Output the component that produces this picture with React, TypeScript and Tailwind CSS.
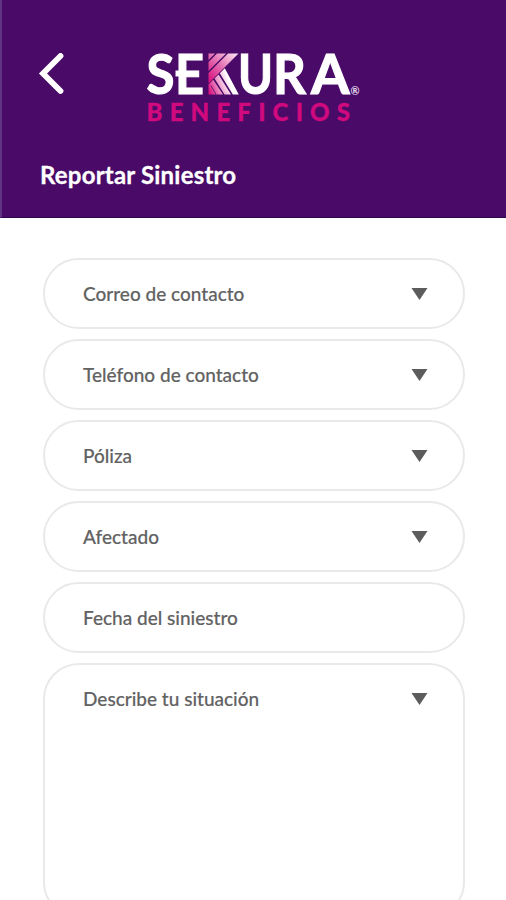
const FONT = "font-[Lato,sans-serif]";

function BackIcon() {
  return (
    <svg className="h-[42px] w-[26px]" viewBox="0 0 26 42" fill="none" stroke="#fff" strokeWidth="5.8" strokeLinecap="round">
      <path d="M22.500 3 5 20.500 22.500 38" strokeLinejoin="miter" />
    </svg>
  );
}

function Logo() {
  return (
    <svg className="h-[80px] w-[220px] overflow-visible" viewBox="144 48 220 80" fontFamily="Lato, sans-serif" fontWeight="700">
      <defs>
        <linearGradient id="upper" gradientUnits="userSpaceOnUse" x1="208" y1="80" x2="236" y2="53">
          <stop offset="0" stopColor="#d9117d" />
          <stop offset="0.45" stopColor="#e366ad" />
          <stop offset="1" stopColor="#fbe3f1" />
        </linearGradient>
        <linearGradient id="lower" gradientUnits="userSpaceOnUse" x1="208" y1="88" x2="229" y2="80">
          <stop offset="0" stopColor="#dc1480" />
          <stop offset="0.5" stopColor="#ee9bcb" />
          <stop offset="1" stopColor="#ffffff" />
        </linearGradient>
      </defs>
      <g fill="#fff" stroke="#fff" strokeWidth="1.2" fontSize="56">
        <text x="146.500" y="93.500" textLength="28" lengthAdjust="spacingAndGlyphs">S</text>
        <text x="175" y="93.700" textLength="29" lengthAdjust="spacingAndGlyphs">E</text>
        <text x="238" y="93.500" textLength="35" lengthAdjust="spacingAndGlyphs">U</text>
        <text x="273" y="93.700" textLength="33" lengthAdjust="spacingAndGlyphs">R</text>
        <text x="311" y="93.700" textLength="38.500" lengthAdjust="spacingAndGlyphs">A</text>
      </g>
      <path d="M175.500 70.500h8v6h-8z" fill="#fff" />
      <path d="M208.500 53.500h6.500l-6.500 6.500zM217 53.500h9l-17.500 17.500v-9zM228 53.500h10.500L208.500 83.500v-10.500z" fill="url(#upper)" />
      <path d="M219.800 73.200l5-5 14 26.300h-6zM214.500 78.500l4-4 12.500 20h-6.500zM208.500 84.500l4.700-4.700 9.800 14.700h-14.500z" fill="url(#lower)" />
      <path d="M216 94.500l-5-9" stroke="#490a68" strokeWidth="0.8" />
      <text x="350.500" y="95" fontSize="11" fontWeight="700" fill="#e3d9ec">®</text>
      <text x="146.500" y="121" fontSize="24" fontWeight="900" fill="#d1097f" stroke="#d1097f" strokeWidth="0.3" textLength="210.5" letterSpacing="7">BENEFICIOS</text>
    </svg>
  );
}

function Field({ label, arrow = true, tall = false }: { label: string; arrow?: boolean; tall?: boolean }) {
  return (
    <div className={`flex w-[422px] shrink-0 items-start justify-between rounded-[36px] border-2 border-[#e9e9e9] bg-white pl-[38px] pr-[35px] ${tall ? "h-[255px]" : "h-[71px]"}`}>
      <span className="mt-[20px] text-[19px] leading-[28px] font-medium text-[#626262] [-webkit-text-stroke:0.15px_#626262]">{label}</span>
      {arrow && (
        <svg className="mt-[28px] h-[13px] w-[17px]" viewBox="0 0 17 13">
          <path d="M.5 0h16L8.500 12z" fill="#5c5c5c" />
        </svg>
      )}
    </div>
  );
}

export default function App() {
  return (
    <main className={`flex h-[900px] w-[506px] flex-col overflow-hidden bg-white ${FONT}`}>
      <header className="h-[218px] shrink-0 border-b border-l-2 border-b-[#2e0650] border-l-[#603585] bg-[#490a68]">
        <div className="flex items-start pt-[48px] pl-[36px]">
          <div className="mt-[5px]"><BackIcon /></div>
          <div className="ml-[80px]"><Logo /></div>
        </div>
        <h1 className="mt-[31px] pl-[38px] text-[24px] leading-[32px] font-bold tracking-[0.2px] text-white [-webkit-text-stroke:0.3px_#fff]">Reportar Siniestro</h1>
      </header>
      <form className="flex flex-col gap-[10px] pt-[40px] pl-[43px]">
        <Field label="Correo de contacto" />
        <Field label="Teléfono de contacto" />
        <Field label="Póliza" />
        <Field label="Afectado" />
        <Field label="Fecha del siniestro" arrow={false} />
        <Field label="Describe tu situación" tall />
      </form>
    </main>
  );
}
